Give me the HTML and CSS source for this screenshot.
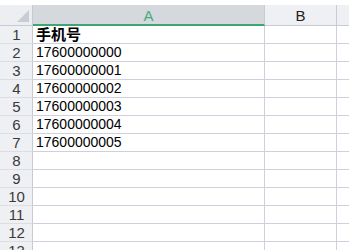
FILE: index.html
```html
<!DOCTYPE html>
<html>
<head>
<meta charset="utf-8">
<link rel="stylesheet" href="styles.css">
</head>
<body>
<div class="sheet">
  <div class="top"></div>
  <div class="grid">
    <div class="corner"><span class="tri"></span></div>
    <div class="colh sel">A</div>
    <div class="colh">B</div>
    <div class="colh last"></div>

    <div class="rowh">1</div><div class="cell bold">手机号</div><div class="cell"></div><div class="cell last"></div>
    <div class="rowh">2</div><div class="cell">17600000000</div><div class="cell"></div><div class="cell last"></div>
    <div class="rowh">3</div><div class="cell">17600000001</div><div class="cell"></div><div class="cell last"></div>
    <div class="rowh">4</div><div class="cell">17600000002</div><div class="cell"></div><div class="cell last"></div>
    <div class="rowh">5</div><div class="cell">17600000003</div><div class="cell"></div><div class="cell last"></div>
    <div class="rowh">6</div><div class="cell">17600000004</div><div class="cell"></div><div class="cell last"></div>
    <div class="rowh">7</div><div class="cell">17600000005</div><div class="cell"></div><div class="cell last"></div>
    <div class="rowh">8</div><div class="cell"></div><div class="cell"></div><div class="cell last"></div>
    <div class="rowh">9</div><div class="cell"></div><div class="cell"></div><div class="cell last"></div>
    <div class="rowh">10</div><div class="cell"></div><div class="cell"></div><div class="cell last"></div>
    <div class="rowh">11</div><div class="cell"></div><div class="cell"></div><div class="cell last"></div>
    <div class="rowh">12</div><div class="cell"></div><div class="cell"></div><div class="cell last"></div>
    <div class="rowh">13</div><div class="cell"></div><div class="cell"></div><div class="cell last"></div>
  </div>
</div>
</body>
</html>
```
FILE: styles.css
```css
html, body {
  margin: 0;
  padding: 0;
  background: #ffffff;
  overflow: hidden;
}
.sheet {
  width: 349px;
  height: 250px;
  overflow: hidden;
  font-family: "Liberation Sans", "Noto Sans CJK SC", sans-serif;
  color: #000;
}
.top {
  height: 5px;
  background: #ffffff;
}
.grid {
  display: grid;
  grid-template-columns: 33px 232px 72px 12px;
  grid-template-rows: 21px repeat(13, 18px);
}
.corner {
  background: #eceef2;
  border-right: 1px solid #c8cad3;
  border-bottom: 1px solid #c8cad3;
  box-sizing: border-box;
  position: relative;
}
.tri {
  position: absolute;
  right: 3px;
  bottom: 3px;
  width: 0;
  height: 0;
  border-left: 12px solid transparent;
  border-bottom: 12px solid #c9ccd2;
}
.colh {
  box-sizing: border-box;
  background: #eef0f3;
  border-right: 1px solid #c8cad3;
  border-bottom: 1px solid #c8cad3;
  display: flex;
  align-items: center;
  justify-content: center;
  font-size: 15px;
  color: #222;
  padding-top: 1px;
}
.colh.sel {
  background: #d5d8dd;
  color: #45ab7b;
  border-bottom: 2px solid #3da673;
}
.colh.last {
  border-right: none;
}
.rowh {
  box-sizing: border-box;
  background: #eef0f3;
  border-right: 1px solid #c8cad3;
  border-bottom: 1px solid #dcdee4;
  display: flex;
  align-items: center;
  justify-content: center;
  font-size: 15px;
  color: #3a3a3a;
  padding-left: 1px;
}
.cell {
  box-sizing: border-box;
  border-right: 1px solid #cfd0db;
  border-bottom: 1px solid #cfd0db;
  font-size: 14px;
  line-height: 17px;
  padding-left: 3px;
  white-space: nowrap;
  overflow: hidden;
}
.cell.last {
  border-right: none;
}
.cell.bold {
  font-weight: bold;
  font-size: 15px;
}
```
